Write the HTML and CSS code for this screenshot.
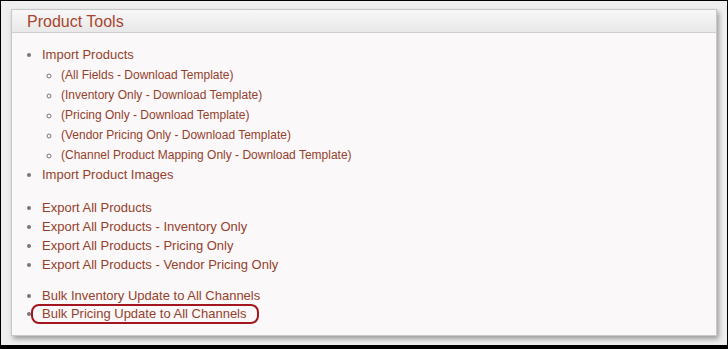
FILE: index.html
```html
<!DOCTYPE html>
<html>
<head>
<meta charset="utf-8">
<title>Product Tools</title>
<link rel="stylesheet" href="styles.css">
</head>
<body>
<div class="page">
  <div class="panel">
    <div class="panel-head">Product Tools</div>
    <div class="panel-body">
      <ul class="tools g1">
        <li><a href="#">Import Products</a>
          <ul class="sub">
            <li><a href="#">(All Fields - Download Template)</a></li>
            <li><a href="#">(Inventory Only - Download Template)</a></li>
            <li><a href="#">(Pricing Only - Download Template)</a></li>
            <li><a href="#">(Vendor Pricing Only - Download Template)</a></li>
            <li><a href="#">(Channel Product Mapping Only - Download Template)</a></li>
          </ul>
        </li>
        <li><a href="#">Import Product Images</a></li>
      </ul>
      <ul class="tools g2">
        <li><a href="#">Export All Products</a></li>
        <li><a href="#">Export All Products - Inventory Only</a></li>
        <li><a href="#">Export All Products - Pricing Only</a></li>
        <li><a href="#">Export All Products - Vendor Pricing Only</a></li>
      </ul>
      <ul class="tools g3">
        <li><a href="#">Bulk Inventory Update to All Channels</a></li>
        <li class="marked"><a href="#">Bulk Pricing Update to All Channels</a><span class="highlight"></span></li>
      </ul>
    </div>
  </div>
</div>
</body>
</html>
```

FILE: styles.css
```css
html, body {
  margin: 0;
  padding: 0;
  background: #000;
}
body {
  font-family: "Liberation Sans", Arial, sans-serif;
}
.page {
  margin: 1px 1px 4px 1px;
  height: 344px;
  box-sizing: border-box;
  padding: 8px 10px 0 10px;
  background: #efefef;
}
.panel {
  height: 327px;
  box-sizing: border-box;
  border: 1px solid #c8c8c8;
  background: #faf8f8;
  box-shadow: 2px 3px 5px rgba(0, 0, 0, 0.35);
}
.panel-head {
  height: 23px;
  box-sizing: border-box;
  border-bottom: 1px solid #cfcfcf;
  background: linear-gradient(#f8f8f8, #e8e8e8);
  color: #a8452f;
  font-size: 16px;
  line-height: 24px;
  padding-left: 15px;
}
.panel-body {
  padding-top: 12px;
}
.tools {
  margin: 0;
  padding-left: 30px;
  font-size: 13px;
  color: #777;
  list-style: disc;
}
.tools a {
  color: #953f2d;
  text-decoration: none;
}
.g1 { line-height: 20px; }
.g2 { line-height: 19px; margin-top: 13px; }
.g3 { line-height: 18px; margin-top: 13px; }
.sub {
  margin: 0;
  padding-left: 19px;
  list-style: circle;
  font-size: 12px;
}
.marked {
  position: relative;
}
.highlight {
  position: absolute;
  left: -11px;
  top: -1px;
  width: 228px;
  height: 20px;
  box-sizing: border-box;
  border: 2px solid #a3161f;
  border-radius: 8px;
}
```
